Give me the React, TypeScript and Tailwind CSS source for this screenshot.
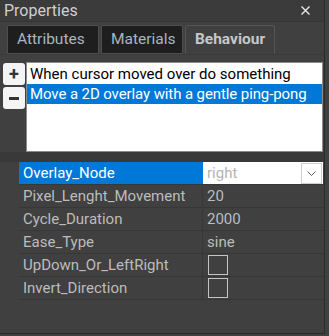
const font = { fontFamily: 'Roboto, "Open Sans", sans-serif' };

const rows: { name: string; value?: string; kind: "select" | "text" | "check" }[] = [
  { name: "Overlay_Node", value: "right", kind: "select" },
  { name: "Pixel_Lenght_Movement", value: "20", kind: "text" },
  { name: "Cycle_Duration", value: "2000", kind: "text" },
  { name: "Ease_Type", value: "sine", kind: "text" },
  { name: "UpDown_Or_LeftRight", kind: "check" },
  { name: "Invert_Direction", kind: "check" },
];

export default function App() {
  return (
    <div className="h-[336px] w-[329px] bg-[#404040]" style={font}>
      <div className="h-[334px] w-[325px] border-b border-r border-[#2b2b2b] bg-[#404040]">
        {/* title */}
        <div className="flex h-[22px] items-center justify-between border-b border-[#353535] bg-[#3b3b3b] pl-1 pr-[14px]">
          <span className="text-[16px] leading-none text-[#cfcfcf]">Properties</span>
          <svg width="9" height="9" viewBox="0 0 9 9">
            <path d="M0.5 0.5 L8.5 8.5 M8.5 0.5 L0.5 8.5" stroke="#e8e8e8" strokeWidth="1.4" />
          </svg>
        </div>

        {/* tabs */}
        <div className="flex h-[33px] items-end gap-[2px] border-b border-[#3a3a3a] pl-[7px] text-[15.5px]">
          <div className="flex h-[29px] w-[92px] items-center rounded-t-[2px] border border-[#4e4e4e] bg-[#1e1e1e] pl-[9px] text-[#a9b6c2]">
            Attributes
          </div>
          <div className="flex h-[29px] w-[82px] items-center rounded-t-[2px] border border-[#4e4e4e] bg-[#1e1e1e] pl-[9px] text-[#a9b6c2]">
            Materials
          </div>
          <div className="flex h-[29px] w-[90px] items-center justify-center rounded-t-[3px] border border-b-0 border-[#555555] bg-[#404040] font-bold text-[#c4c8cc]">
            Behaviour
          </div>
        </div>

        {/* behaviour list */}
        <div className="flex gap-[1px] pl-[3px] pt-[7px]">
          <div className="flex flex-col gap-[2px] pt-[1px]">
            <button className="flex h-[22px] w-[22px] items-center justify-center rounded-[3px] bg-[#f4f4f4] text-[18px] font-bold leading-none text-[#333]">
              +
            </button>
            <button className="flex h-[22px] w-[22px] items-center justify-center rounded-[3px] bg-[#f4f4f4]">
              <span className="block h-[3px] w-[10px] bg-[#333]" />
            </button>
          </div>
          <div className="h-[90px] w-[297px] whitespace-nowrap border border-[#8a8a8a] bg-white pt-[1px] text-[15px] leading-[20px]">
            <div className="pl-[3px] text-black">When cursor moved over do something</div>
            <div className="bg-[#0078d7] pl-[3px] tracking-[-0.1px] text-white">Move a 2D overlay with a gentle ping-pong</div>
          </div>
        </div>

        <div className="h-[10px] bg-[#393939]" />

        {/* property grid */}
        <div className="pl-[19px]">
          {rows.map((r, i) => (
            <div key={r.name} className="flex h-[23px] border-b border-[#373737] text-[15px] text-[#bcbcbc]">
              <div
                className={
                  i === 0
                    ? "flex w-[184px] items-center bg-[#0078d7] pl-1 text-white"
                    : "flex w-[184px] items-center border-r border-[#373737] pl-1"
                }
              >
                {r.name}
              </div>
              {r.kind === "select" && (
                <div className="flex w-[120px] items-center justify-between bg-white pl-1 pr-[1px]">
                  <span className="text-[#b4b4b4]">{r.value}</span>
                  <div className="flex h-[21px] w-[21px] items-center justify-center border border-[#cfcfcf] bg-white">
                    <svg width="9" height="5" viewBox="0 0 9 5">
                      <path d="M0.5 0.5 L4.5 4.5 L8.5 0.5" fill="none" stroke="#555" strokeWidth="1" />
                    </svg>
                  </div>
                </div>
              )}
              {r.kind === "text" && <div className="flex w-[120px] items-center pl-1">{r.value}</div>}
              {r.kind === "check" && (
                <div className="flex w-[120px] items-center pl-[5px]">
                  <div className="h-[20px] w-[20px] border border-[#c4c4c4]" />
                </div>
              )}
            </div>
          ))}
        </div>
      </div>
    </div>
  );
}
